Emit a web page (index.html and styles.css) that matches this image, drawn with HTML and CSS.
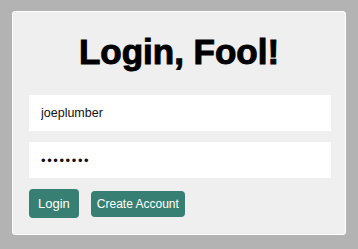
FILE: index.html
```html
<!DOCTYPE html>
<html>
<head>
<meta charset="utf-8">
<link rel="stylesheet" href="styles.css">
</head>
<body>
<div class="card">
  <h1 class="title">Login, Fool!</h1>
  <form class="form">
    <input class="field" type="text" value="joeplumber">
    <input class="field field-pass" type="password" value="password">
    <div class="actions">
      <button type="button" class="btn btn-login">Login</button>
      <button type="button" class="btn btn-create">Create Account</button>
    </div>
  </form>
</div>
</body>
</html>
```

FILE: styles.css
```css
html, body {
  margin: 0;
  padding: 0;
}
body {
  background: #b3b3b3;
  font-family: "Liberation Sans", Arial, sans-serif;
  padding: 11px 12px 14px;
}
.card {
  background: #efefef;
  border: 1px solid #ffffff;
  border-radius: 3px;
  padding: 0 16px 16px;
}
.title {
  margin: 21px 0 24px;
  font-size: 35px;
  line-height: 38px;
  font-weight: 700;
  text-align: center;
  color: #000;
  -webkit-text-stroke: 1px #000;
}
.form {
  display: flex;
  flex-direction: column;
  margin: 0;
}
.field {
  box-sizing: border-box;
  width: 302px;
  height: 36px;
  border: none;
  background: #fff;
  padding: 0 12px;
  margin: 0 0 11px;
  font-family: "Liberation Sans", Arial, sans-serif;
  font-size: 12.5px;
  color: #111;
  outline: none;
  border-radius: 0;
}
.field-pass {
  letter-spacing: 1.6px;
  font-size: 13px;
}
.actions {
  display: flex;
  align-items: center;
  gap: 12px;
  margin-top: 0;
}
.btn {
  background: #367f72;
  color: #fff;
  border: none;
  border-radius: 4px;
  font-family: "Liberation Sans", Arial, sans-serif;
  margin: 0;
  cursor: pointer;
}
.btn-login {
  font-size: 13px;
  line-height: 15px;
  padding: 7px 9px;
}
.btn-create {
  font-size: 12px;
  line-height: 14px;
  padding: 6px 6px;
}
```
